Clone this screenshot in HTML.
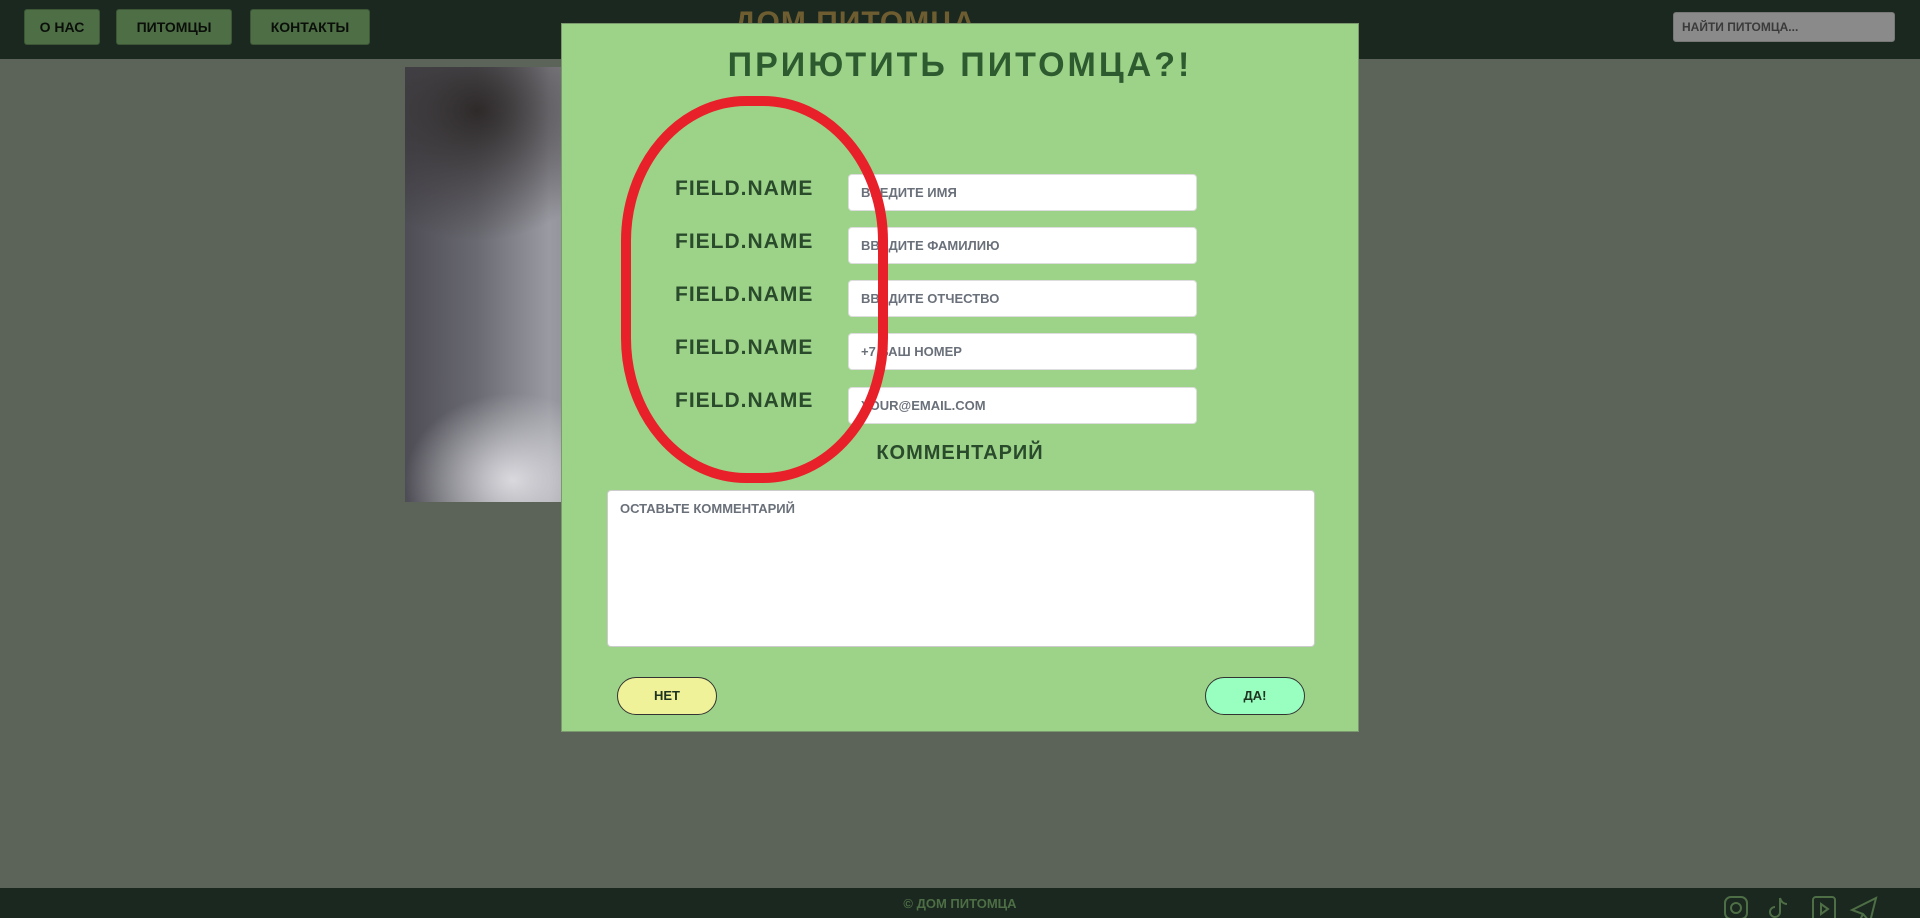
<!DOCTYPE html>
<html><head><meta charset="utf-8"><style>
*{margin:0;padding:0;box-sizing:border-box}
body{width:1920px;height:918px;overflow:hidden;background:#5c645a;font-family:"Liberation Sans","DejaVu Sans",sans-serif;position:relative;text-transform:uppercase;font-weight:bold}
.hdr{position:absolute;left:0;top:0;width:1920px;height:59px;background:#1a2820}
.nb{position:absolute;top:9px;height:36px;background:#4e6e45;border:1px solid #3c5636;border-radius:3px;color:#0a0f0a;font-size:14px;line-height:34px;text-align:center}
.logo{position:absolute;left:720px;top:6px;width:270px;text-align:center;color:#6e5d30;font-size:30px;letter-spacing:1px}
.search{position:absolute;left:1673px;top:12px;width:222px;height:30px;background:#8a8a8a;border:1px solid #777;border-radius:3px;color:#3a3a3a;font-size:12px;line-height:28px;padding-left:8px}
.img{position:absolute;left:405px;top:67px;width:360px;height:435px;background:linear-gradient(90deg,#4e4d55 0%,#6a6a72 20%,#9a9aa2 40%,#7d7c84 60%,#585860 80%,#8b8b92 100%)}
.img2{position:absolute;left:405px;top:67px;width:360px;height:435px;background:radial-gradient(ellipse 40% 30% at 20% 10%,#2e2a2a,transparent),radial-gradient(ellipse 30% 20% at 30% 95%,#d9d9de,transparent)}
.modal{position:absolute;left:561px;top:23px;width:798px;height:709px;background:#9dd389;border:1px solid #7a9a6e}
.ttl{position:absolute;left:0;top:22px;width:100%;text-align:center;color:#2e5a30;font-size:34px;letter-spacing:3px}
.lab{position:absolute;left:113px;width:160px;color:#2a4a2c;font-size:21px;letter-spacing:1px}
.inp{position:absolute;left:286px;width:349px;height:37px;background:#fff;border:1px solid #ddd;border-radius:4px;color:#6a707a;font-size:13px;line-height:35px;padding-left:12px}
.com{position:absolute;left:0;top:418px;width:100%;text-align:center;color:#2a4a2c;font-size:20px;letter-spacing:1px}
.ta{position:absolute;left:45px;top:466px;width:708px;height:157px;background:#fff;border:1px solid #ccc;border-radius:4px;color:#6a707a;font-size:13px;padding:10px 12px}
.btn{position:absolute;top:653px;width:100px;height:38px;border:1px solid #333;border-radius:19px;font-size:13px;line-height:36px;text-align:center;color:#1e3320}
.ftr{position:absolute;left:0;top:888px;width:1920px;height:30px;background:#1a2820}
.ft{position:absolute;left:0;top:8px;width:100%;text-align:center;color:#4e6e45;font-size:13px}
</style></head><body>
<div class="hdr">
<div class="nb" style="left:24px;width:76px">О нас</div>
<div class="nb" style="left:116px;width:116px">Питомцы</div>
<div class="nb" style="left:250px;width:120px">Контакты</div>
<div class="logo">Дом питомца</div>
<div class="search">Найти питомца...</div>
</div>
<div class="img"></div><div class="img2"></div>
<div class="modal">
<div class="ttl">Приютить питомца?!</div>
<div class="lab" style="top:153px">field.name</div>
<div class="lab" style="top:206px">field.name</div>
<div class="lab" style="top:259px">field.name</div>
<div class="lab" style="top:312px">field.name</div>
<div class="lab" style="top:365px">field.name</div>
<div class="inp" style="top:150px">введите имя</div>
<div class="inp" style="top:203px">введите Фамилию</div>
<div class="inp" style="top:256px">введите отчество</div>
<div class="inp" style="top:309px">+7 ваш номер</div>
<div class="inp" style="top:363px">YOUR@EMAIL.COM</div>
<div class="com">Комментарий</div>
<div class="ta">оставьте комментарий</div>
<div class="btn" style="left:55px;background:#f0f29a">Нет</div>
<div class="btn" style="left:643px;background:#99ffc0">Да!</div>
<svg style="position:absolute;left:50px;top:64px" width="290" height="410"><rect x="14" y="13" width="257" height="377" rx="120" ry="140" fill="none" stroke="#e8202a" stroke-width="10"/></svg>
</div>
<div class="ftr"><div class="ft">© Дом питомца</div>
<svg style="position:absolute;left:1722px;top:6px" width="170" height="24" fill="none" stroke="#4e6e45" stroke-width="2">
<rect x="3" y="3" width="22" height="22" rx="6"/><circle cx="14" cy="14" r="5"/>
<path d="M58 4v14a5 5 0 1 1-5-5M58 4c1 4 4 6 7 6"/>
<rect x="91" y="3" width="22" height="24" rx="3"/><path d="M99 10l7 5-7 5z"/>
<path d="M130 16l24-12-6 24-7-8zM141 20l-3 6"/>
</svg></div>
</body></html>
